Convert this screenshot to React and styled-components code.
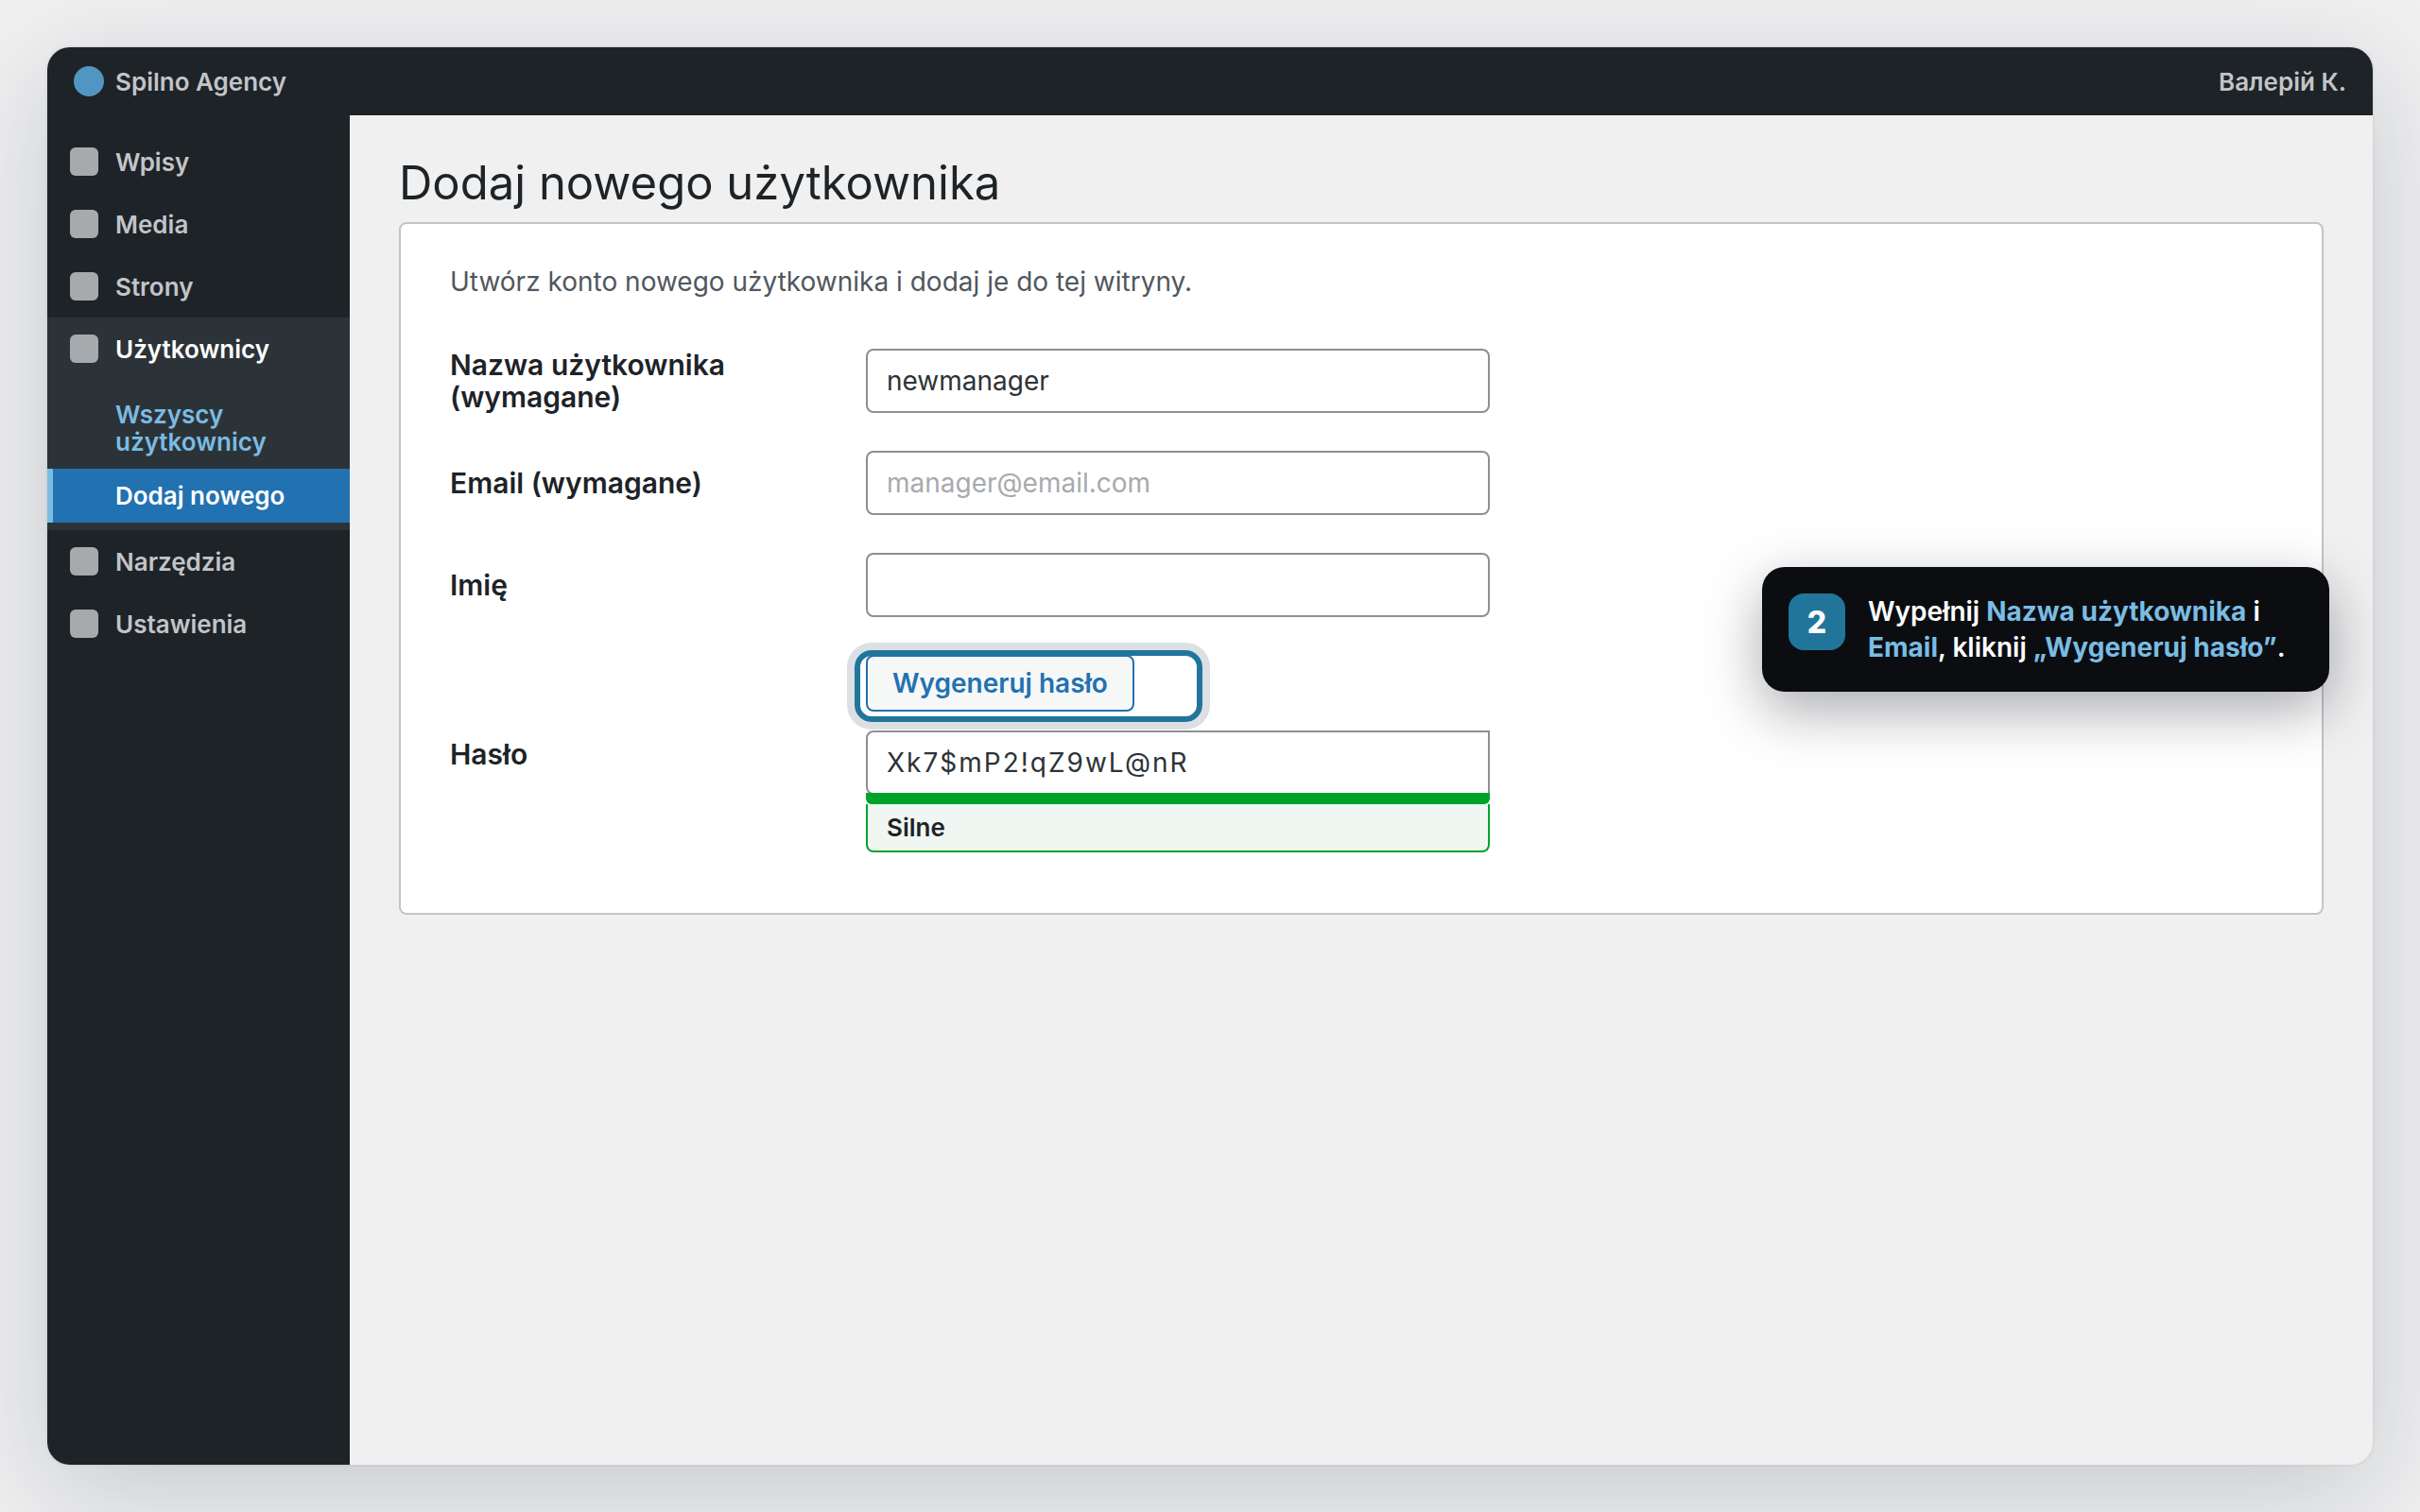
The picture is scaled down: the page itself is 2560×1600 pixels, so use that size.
import React from 'react';
import styled, { createGlobalStyle } from 'styled-components';

const COLOURS = {
    dark: '#1d2327',
    darkActive: '#2c3338',
    muted: '#c3c4c7',
    accent: '#2271b1',
    sky: '#7abce3',
    teal: '#21759b',
    page: '#f0f0f1',
    text: '#1d2327',
    success: '#00a32a',
};

const GlobalStyle = createGlobalStyle`
    * {
        box-sizing: border-box;
    }

    body {
        margin: 0;
        background: ${COLOURS.page};
        font-family: Inter, "Noto Sans", sans-serif;
        color: ${COLOURS.text};
    }

    input, button {
        font-family: inherit;
    }
`;

const MenuItem = ({ name, active }) => (
    <li>
        <MenuLink href="#" $active={active}>
            <MenuIcon />
            {name}
        </MenuLink>
    </li>
);

const FormRow = ({ id, label, children }) => (
    <Row>
        <Label htmlFor={id}>{label}</Label>
        <Field>{children}</Field>
    </Row>
);

const App = () => (
    <Page>
        <GlobalStyle />
        <Window>
            <TopBar>
                <Brand>
                    <Logo />
                    Spilno Agency
                </Brand>
                <span>Валерій К.</span>
            </TopBar>
            <Body>
                <Sidebar>
                    <Menu>
                        <MenuItem name="Wpisy" />
                        <MenuItem name="Media" />
                        <MenuItem name="Strony" />
                        <MenuItem name="Użytkownicy" active />
                        <li>
                            <SubMenu>
                                <li><SubLink href="#">Wszyscy użytkownicy</SubLink></li>
                                <li><SubLink href="#" $current>Dodaj nowego</SubLink></li>
                            </SubMenu>
                        </li>
                        <MenuItem name="Narzędzia" />
                        <MenuItem name="Ustawienia" />
                    </Menu>
                </Sidebar>
                <Main>
                    <Title>Dodaj nowego użytkownika</Title>
                    <Card>
                        <Intro>Utwórz konto nowego użytkownika i dodaj je do tej witryny.</Intro>
                        <Form>
                            <FormRow id="login" label="Nazwa użytkownika (wymagane)">
                                <Input id="login" type="text" defaultValue="newmanager" />
                            </FormRow>
                            <FormRow id="email" label="Email (wymagane)">
                                <Input id="email" type="email" placeholder="manager@email.com" />
                            </FormRow>
                            <FormRow id="name" label="Imię">
                                <Input id="name" type="text" />
                            </FormRow>
                            <FormRow id="password" label="Hasło">
                                <Generate>
                                    <GenerateButton type="button">Wygeneruj hasło</GenerateButton>
                                    <Highlight />
                                </Generate>
                                <PasswordInput id="password" type="text" defaultValue="Xk7$mP2!qZ9wL@nR" />
                                <StrengthBar />
                                <Strength>Silne</Strength>
                            </FormRow>
                        </Form>
                        <Tip>
                            <Step>2</Step>
                            <TipText>
                                Wypełnij <b>Nazwa użytkownika</b> i <b>Email</b>, kliknij <b>„Wygeneruj hasło”</b>.
                            </TipText>
                        </Tip>
                    </Card>
                </Main>
            </Body>
        </Window>
    </Page>
);

const Page = styled.div`
    min-height: 100vh;
    padding: 50px;
    display: flex;
`;

const Window = styled.div`
    flex: 1;
    display: flex;
    flex-direction: column;
    border-radius: 24px;
    overflow: hidden;
    background: ${COLOURS.page};
    box-shadow: 0 0 0 2px rgba(12, 14, 20, 0.03), 0 30px 120px rgba(12, 20, 40, 0.18);
`;

const TopBar = styled.header`
    height: 72px;
    padding: 0 28px;
    display: flex;
    align-items: center;
    justify-content: space-between;
    background: ${COLOURS.dark};
    color: ${COLOURS.muted};
    font-size: 26px;
    font-weight: 600;
`;

const Brand = styled.div`
    display: flex;
    align-items: center;
    gap: 12px;
`;

const Logo = styled.span`
    width: 32px;
    height: 32px;
    border-radius: 50%;
    background: #5196c3;
`;

const Body = styled.div`
    flex: 1;
    display: flex;
`;

const Sidebar = styled.nav`
    width: 320px;
    flex-shrink: 0;
    padding-top: 16px;
    background: ${COLOURS.dark};
`;

const Menu = styled.ul`
    margin: 0;
    padding: 0;
    list-style: none;
`;

const MenuLink = styled.a`
    height: 66px;
    padding: 0 24px;
    display: flex;
    align-items: center;
    gap: 18px;
    background: ${({ $active }) => ($active ? COLOURS.darkActive : 'transparent')};
    color: ${({ $active }) => ($active ? '#fff' : COLOURS.muted)};
    font-size: 26px;
    font-weight: 600;
    text-decoration: none;
`;

const MenuIcon = styled.span`
    width: 30px;
    height: 30px;
    border-radius: 6px;
    background: #a7aaad;
`;

const SubMenu = styled(Menu)`
    padding: 8px 0;
    background: ${COLOURS.darkActive};
`;

const SubLink = styled.a`
    display: block;
    padding: 14px 24px 14px 66px;
    border-left: 6px solid ${({ $current }) => ($current ? COLOURS.sky : 'transparent')};
    background: ${({ $current }) => ($current ? COLOURS.accent : 'transparent')};
    color: ${({ $current }) => ($current ? '#fff' : COLOURS.sky)};
    font-size: 26px;
    font-weight: 600;
    line-height: 29px;
    text-decoration: none;
`;

const Main = styled.main`
    flex: 1;
    padding: 42px 52px;
`;

const Title = styled.h1`
    margin: 0 0 11px;
    font-size: 49px;
    font-weight: 400;
    line-height: 60px;
`;

const Card = styled.section`
    position: relative;
    padding: 44px 52px 64px;
    border: 2px solid ${COLOURS.muted};
    border-radius: 8px;
    background: #fff;
`;

const Intro = styled.p`
    margin: 0 0 54px;
    color: #50575e;
    font-size: 28px;
    line-height: 34px;
`;

const Form = styled.form`
    display: flex;
    flex-direction: column;
    gap: 40px;
`;

const Row = styled.div`
    display: grid;
    grid-template-columns: 400px minmax(0, 660px);
    column-gap: 40px;
    align-items: center;
`;

const Label = styled.label`
    font-size: 30px;
    font-weight: 600;
    line-height: 34px;
`;

const Field = styled.div`
    display: flex;
    flex-direction: column;
`;

const Input = styled.input`
    width: 100%;
    height: 68px;
    padding: 0 20px;
    border: 2px solid #8c8f94;
    border-radius: 8px;
    background: #fff;
    color: #2c3338;
    font-size: 28px;
    outline: none;

    &::placeholder {
        color: #a7aaad;
        opacity: 1;
    }
`;

const PasswordInput = styled(Input)`
    border-radius: 8px 0 0 8px;
    letter-spacing: 2px;
`;

const Generate = styled.div`
    position: relative;
    margin-bottom: 20px;
`;

const GenerateButton = styled.button`
    display: block;
    height: 60px;
    padding: 0 26px;
    border: 2px solid ${COLOURS.accent};
    border-radius: 8px;
    background: #f6f7f7;
    color: ${COLOURS.accent};
    font-size: 28px;
    font-weight: 600;
`;

const Highlight = styled.span`
    position: absolute;
    top: -5px;
    left: -12px;
    width: 368px;
    height: 76px;
    border: 6px solid ${COLOURS.teal};
    border-radius: 18px;
    box-shadow: 0 0 0 8px #dce0e5;
    pointer-events: none;
`;

const StrengthBar = styled.div`
    position: relative;
    height: 12px;
    margin-top: -2px;
    border-radius: 0 0 6px 6px;
    background: ${COLOURS.success};
`;

const Strength = styled.div`
    height: 51px;
    padding: 0 20px;
    display: flex;
    align-items: center;
    border: 2px solid ${COLOURS.success};
    border-top: 0;
    border-radius: 0 0 8px 8px;
    background: #f0f6f1;
    font-size: 26px;
    font-weight: 600;
`;

const Tip = styled.aside`
    position: absolute;
    top: 363px;
    right: -8px;
    width: 600px;
    padding: 28px;
    display: flex;
    gap: 24px;
    border-radius: 24px;
    background: #0b0d11;
    color: #fff;
    box-shadow: 0 20px 60px rgba(12, 14, 24, 0.35);
`;

const Step = styled.span`
    width: 60px;
    height: 60px;
    flex-shrink: 0;
    display: flex;
    align-items: center;
    justify-content: center;
    border-radius: 16px;
    background: ${COLOURS.teal};
    font-size: 32px;
    font-weight: 800;
`;

const TipText = styled.p`
    margin: 0;
    font-size: 28px;
    font-weight: 600;
    line-height: 38px;

    b {
        color: ${COLOURS.sky};
        font-weight: 700;
    }
`;

export default App;
